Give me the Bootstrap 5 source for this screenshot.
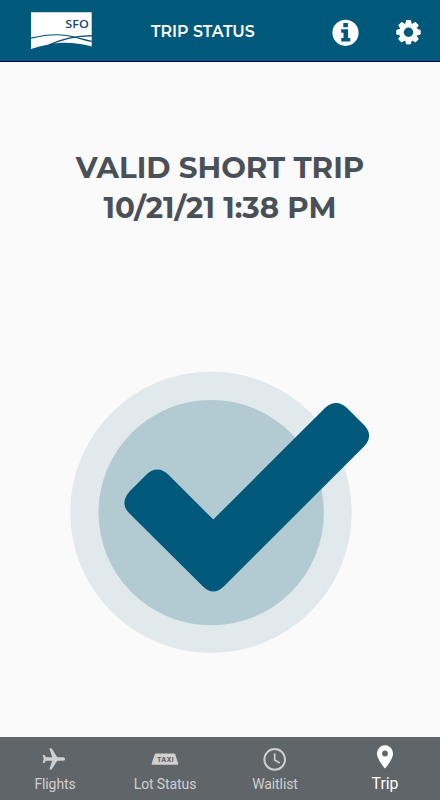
<!DOCTYPE html>
<html lang="en">
<head>
<meta charset="utf-8">
<meta name="viewport" content="width=device-width, initial-scale=1">
<title>Trip Status</title>
<link href="https://cdn.jsdelivr.net/npm/bootstrap@5.3.0/dist/css/bootstrap.min.css" rel="stylesheet">
<style>
  body { background: #fafafa; font-family: Roboto, sans-serif; }
  .topbar { height: 62px; background: #00597b; border-bottom: 1px solid #00004f; padding: 0 18px 0 30px; }
  .brand-logo { width: 62px; height: 38px; }
  .bar-title { font: 600 15.8px/20px Montserrat, Inter, sans-serif; margin: 3px 0 0 59px; width: 105px; }
  .info-link { margin-right: 36px; }
  .trip-heading { font: 700 29.3px/40px Montserrat, Inter, sans-serif; color: #495057; margin: 86px 0 0; }
  .valid-mark { width: 300px; height: 283px; margin: 0 0 83px 70px; }
  .tabbar { height: 63px; background: #5f6569; }
  .tab-link { color: #d2cfcf; font-size: 14px; letter-spacing: -.1px; line-height: 18px; padding-top: 10px; }
  .tab-link svg { width: 30px; height: 24px; margin-bottom: 4px; }
  .tab-link.active { color: #fff; font-size: 15.8px; letter-spacing: 0; padding-top: 7px; }
  .tab-link.active svg { height: 26px; margin-bottom: 5px; }
</style>
<script src="https://cdn.jsdelivr.net/npm/bootstrap@5.3.0/dist/js/bootstrap.bundle.min.js" defer></script>
</head>
<body class="vh-100 d-flex flex-column overflow-hidden">
  <header class="topbar d-flex align-items-center text-white flex-shrink-0">
    <svg class="brand-logo" viewBox="30 12 62 38" role="img" aria-label="SFO">
      <path fill="#fff" d="M31 12.300H91.700V46.500Q76 42.200 62 42.800Q46 44 31 49Z"/>
      <path fill="none" stroke="#00507a" stroke-width="1.200" d="M31 38.200C47 34.300 61 33.800 72 36.500S84 39.800 91.700 41.300"/>
      <path fill="none" stroke="#174b80" stroke-width="1.600" d="M49 45C61 39.300 73 35.800 91.700 35.700"/>
      <text x="65.300" y="27.600" fill="#174b76" font-family="Open Sans, sans-serif" font-size="11.500" font-weight="600" textLength="23.500" lengthAdjust="spacingAndGlyphs">SFO</text>
    </svg>
    <h1 class="bar-title text-nowrap">TRIP STATUS</h1>
    <div class="d-flex align-items-center ms-auto mt-1">
      <a href="#" class="info-link d-flex" aria-label="Information">
        <svg width="27" height="27" viewBox="0 0 27 27"><circle cx="13.500" cy="13.800" r="13.100" fill="#fff"/><path fill="#00597b" d="M11.300 4.100h4.600v4.100h-4.600zM9.200 10.300h6.900v8.700h2.200v3.500H9.200v-3.500h2.300v-5.200H9.200z"/></svg>
      </a>
      <a href="#" class="d-flex" aria-label="Settings">
        <svg width="27" height="27" viewBox="0 0 27 27"><g fill="#fff" transform="translate(13.500 13.200)"><g stroke="#fff" stroke-width="1" stroke-linejoin="round"><path d="M-2 -11.700H2L3 -7H-3ZM-2 11.700H2L3 7H-3ZM-11.700 -2V2L-7 3V-3ZM11.700 -2V2L7 3V-3Z"/><path transform="rotate(45)" d="M-2 -11.700H2L3 -7H-3ZM-2 11.700H2L3 7H-3ZM-11.700 -2V2L-7 3V-3ZM11.700 -2V2L7 3V-3Z"/></g><circle r="9.300"/><circle r="4.700" fill="#00597b"/></g></svg>
      </a>
    </div>
  </header>

  <main class="flex-grow-1 d-flex flex-column">
    <h2 class="trip-heading text-center text-nowrap">
      <span class="d-block">VALID SHORT TRIP</span>
      <span class="d-block">10/21/21 1:38 PM</span>
    </h2>
    <svg class="valid-mark mt-auto flex-shrink-0" viewBox="70 371 300 283" role="img" aria-label="Valid">
      <circle cx="211" cy="512.300" r="140.700" fill="#e1e9ec"/>
      <circle cx="211.200" cy="512.600" r="112.700" fill="#b2cbd3"/>
      <path fill="#00597b" d="M213.300 519.500L169 475.300Q157.500 464 146 475L130 491Q119 503 129.500 513.500L203 586.500Q213.300 596.500 223.700 586.500L364 446.500Q374 436 364.500 425.500L347 408Q336 398 325 408Z"/>
    </svg>
  </main>

  <nav class="tabbar row g-0 text-center flex-shrink-0">
    <a href="#" class="tab-link col-3 d-flex flex-column align-items-center text-decoration-none">
      <svg viewBox="0 0 30 24"><path fill="currentColor" transform="translate(27.300 -.9) scale(1.120) rotate(90)" d="M21 16v-2l-8-5V3.500C13 2.670 12.330 2 11.500 2S10 2.670 10 3.500V9l-8 5v2l8-2.500V19l-2 1.500V22l3.500-1 3.500 1v-1.500L13 19v-5.500z"/></svg>
      <span>Flights</span>
    </a>
    <a href="#" class="tab-link col-3 d-flex flex-column align-items-center text-decoration-none">
      <svg viewBox="0 0 30 24"><path fill="currentColor" d="M6 6.500H24Q25 6.500 25.300 7.500L28.200 16.500Q28.500 17.700 27.500 17.700H2.500Q1.400 17.700 1.700 16.500L4.700 7.500Q5 6.500 6 6.500Z"/><text x="7" y="14.600" fill="#555b60" font-family="Inter, sans-serif" font-size="6.700" font-weight="700" textLength="16.500">TAXI</text></svg>
      <span>Lot Status</span>
    </a>
    <a href="#" class="tab-link col-3 d-flex flex-column align-items-center text-decoration-none">
      <svg viewBox="0 0 30 24"><g fill="none" stroke="currentColor"><circle cx="14.700" cy="12.400" r="10.300" stroke-width="2"/><path stroke-width="1.700" d="M14.700 6.500V13L19.700 16"/></g></svg>
      <span>Waitlist</span>
    </a>
    <a href="#" class="tab-link active col-3 d-flex flex-column align-items-center text-decoration-none" aria-current="page">
      <svg viewBox="0 0 30 26"><path fill="currentColor" fill-rule="evenodd" d="M15 1.300A8.100 8.100 0 0 0 6.900 9.400C6.900 15.500 15 24.500 15 24.500S23.100 15.500 23.100 9.400A8.100 8.100 0 0 0 15 1.300zM15 6.600a2.900 2.900 0 1 1 0 5.800a2.900 2.900 0 0 1 0-5.800z"/></svg>
      <span>Trip</span>
    </a>
  </nav>
</body>
</html>
